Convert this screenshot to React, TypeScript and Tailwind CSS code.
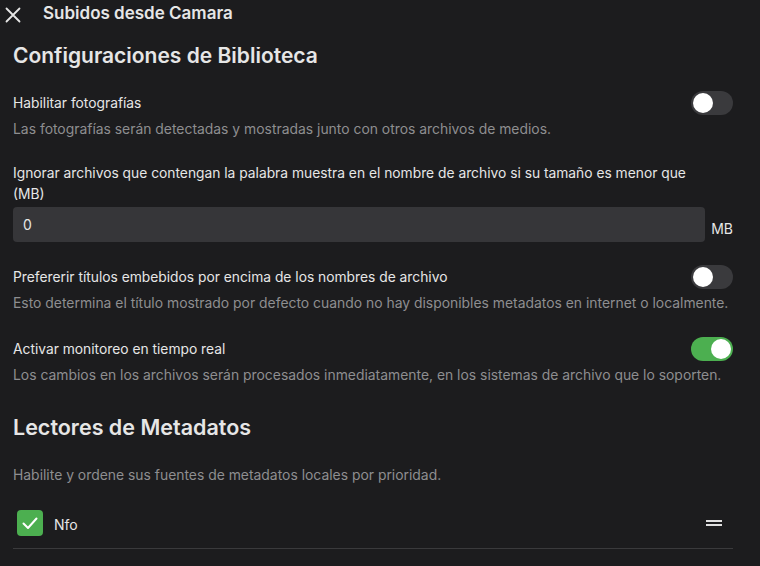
import React, { useState } from "react";

const font = { fontFamily: "Inter, 'Noto Sans', sans-serif" };

const Toggle = ({ on, onChange }: { on: boolean; onChange: () => void }) => (
  <button
    onClick={onChange}
    className={`relative shrink-0 w-[42px] h-[24px] rounded-full ${
      on ? "bg-[#4caf50]" : "bg-[#3a3a3d]"
    }`}
  >
    <span
      className={`absolute top-[2px] w-[20px] h-[20px] rounded-full bg-white ${
        on ? "left-[20px]" : "left-[2px]"
      }`}
    />
  </button>
);

const ToggleRow = ({
  label,
  desc,
  on,
  onChange,
  className,
}: {
  label: string;
  desc: string;
  on: boolean;
  onChange: () => void;
  className: string;
}) => (
  <div className={className}>
    <div className="flex items-center justify-between h-[24px]">
      <span className="text-[13.8px] text-[#e6e6e6]">{label}</span>
      <Toggle on={on} onChange={onChange} />
    </div>
    <p className="mt-1 text-[13.9px] leading-[20px] text-[#8e8e90]">{desc}</p>
  </div>
);

export default function App() {
  const [photos, setPhotos] = useState(false);
  const [embedded, setEmbedded] = useState(false);
  const [realtime, setRealtime] = useState(true);
  const [nfo, setNfo] = useState(true);

  return (
    <div
      className="w-[760px] h-[566px] bg-[#1c1c1e] flex flex-col overflow-hidden"
      style={font}
    >
      {/* cabecera */}
      <div className="h-[47px] shrink-0 flex items-start pt-[5px]">
        <button className="w-[24px] h-[20px] ml-[1px] flex items-center justify-center text-[#e6e6e6]">
          <svg width="16" height="16" viewBox="0 0 16 16" fill="none">
            <path
              d="M1.5 1.5 L14.5 14.5 M14.5 1.5 L1.5 14.5"
              stroke="currentColor"
              strokeWidth="1.8"
              strokeLinecap="round"
            />
          </svg>
        </button>
        <h1 className="ml-[18px] -mt-[2px] text-[17px] leading-[20px] font-semibold text-[#e6e6e6]">
          Subidos desde Camara
        </h1>
      </div>

      {/* contenido desplazado: el título queda recortado bajo la cabecera */}
      <div className="flex-1 overflow-hidden pl-[13px] pr-[27px]">
        <h2 className="-mt-[5px] text-[21px] leading-[28px] font-semibold text-[#e6e6e6]">
          Configuraciones de Biblioteca
        </h2>

        <ToggleRow
          className="mt-[21px]"
          label="Habilitar fotografías"
          desc="Las fotografías serán detectadas y mostradas junto con otros archivos de medios."
          on={photos}
          onChange={() => setPhotos(!photos)}
        />

        <div className="mt-[24px]">
          <label className="block text-[13.8px] leading-[21px] text-[#e6e6e6]">
            Ignorar archivos que contengan la palabra muestra en el nombre de archivo si su tamaño es menor que
            <br />
            (MB)
          </label>
          <div className="mt-[2px] flex items-center gap-[6px]">
            <input
              defaultValue="0"
              className="flex-1 h-[35px] rounded-[4px] bg-[#363639] px-[10px] text-[14px] text-[#e6e6e6] outline-none"
            />
            <span className="pt-[7px] text-[14px] text-[#e6e6e6]">MB</span>
          </div>
        </div>

        <ToggleRow
          className="mt-[23px]"
          label="Prefererir títulos embebidos por encima de los nombres de archivo"
          desc="Esto determina el título mostrado por defecto cuando no hay disponibles metadatos en internet o localmente."
          on={embedded}
          onChange={() => setEmbedded(!embedded)}
        />

        <ToggleRow
          className="mt-[24px]"
          label="Activar monitoreo en tiempo real"
          desc="Los cambios en los archivos serán procesados inmediatamente, en los sistemas de archivo que lo soporten."
          on={realtime}
          onChange={() => setRealtime(!realtime)}
        />

        <h2 className="mt-[28px] text-[21.5px] leading-[28px] font-semibold text-[#e6e6e6]">
          Lectores de Metadatos
        </h2>
        <p className="mt-[24px] text-[13.9px] leading-[20px] text-[#8e8e90]">
          Habilite y ordene sus fuentes de metadatos locales por prioridad.
        </p>

        <div className="mt-[25px] flex items-center pb-[12px] border-b border-[#3a3a3c]">
          <button
            onClick={() => setNfo(!nfo)}
            className={`ml-[4px] w-[26px] h-[26px] rounded-[4px] flex items-center justify-center ${
              nfo ? "bg-[#4caf50]" : "border-2 border-[#8c8c8e]"
            }`}
          >
            {nfo && (
              <svg width="18" height="18" viewBox="0 0 18 18" fill="none">
                <path
                  d="M2.5 9.5 L7 14 L15.5 4.5"
                  stroke="white"
                  strokeWidth="2"
                  strokeLinecap="round"
                  strokeLinejoin="round"
                />
              </svg>
            )}
          </button>
          <span className="ml-[11px] pt-[2px] text-[14px] text-[#e6e6e6]">Nfo</span>
          <div className="ml-auto mr-[11px] flex flex-col gap-[2px]">
            <span className="block w-[16px] h-[2px] bg-[#e0e0e0]" />
            <span className="block w-[16px] h-[2px] bg-[#e0e0e0]" />
          </div>
        </div>
      </div>
    </div>
  );
}
